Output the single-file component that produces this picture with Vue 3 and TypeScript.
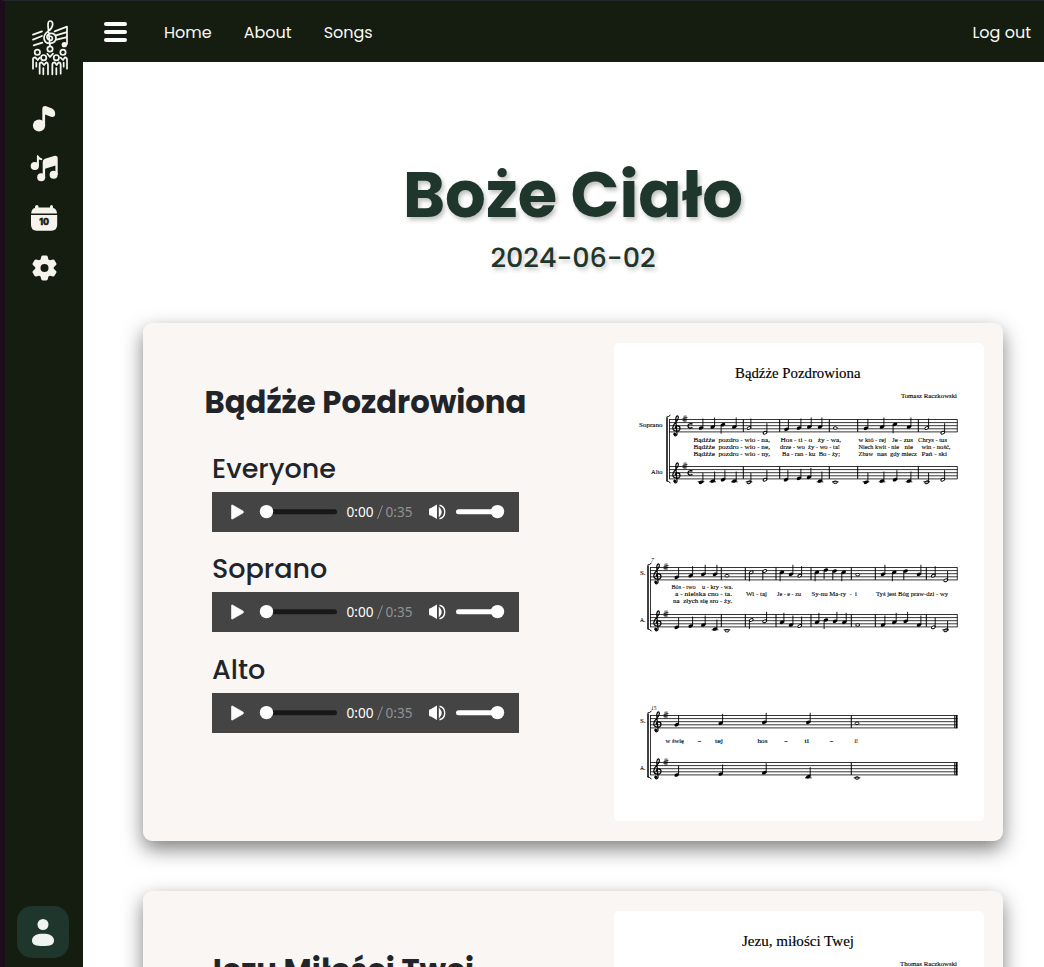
<script setup lang="ts">
type Kind = 'q' | 'h' | 'w'
// x, y, note value, stem pointing down
type Note = [number, number, Kind, boolean?]
interface Lyric { x: number; y: number; w: number; t: string }
interface Staff { top: number; label: string; notes: Note[] }
interface System { left: number; bars: number[]; staves: Staff[]; meter?: boolean; number?: string; final?: boolean; lyrics: Lyric[] }

const links = ['Home', 'About', 'Songs']
const parts = ['Everyone', 'Soprano', 'Alto']

const line = (y: number, items: [number, number, string][]): Lyric[] =>
  items.map(([x, end, t]) => ({ x, y, w: end - x, t }))

const systems: System[] = [
  {
    left: 669, meter: true, bars: [743.3, 779.7, 829.3, 857.7, 918.3],
    staves: [
      { top: 419.5, label: 'Soprano', notes: [[701, 428, 'q'], [712.7, 427, 'q'], [723, 424.7, 'q', true], [734.3, 427, 'q'], [749, 428, 'h'], [765, 432.7, 'h'], [786.5, 429.3, 'q'], [799, 428, 'q'], [809.3, 427, 'q'], [820, 427, 'q'], [835.3, 428, 'w'], [866, 428.3, 'q'], [882, 427, 'q'], [895, 424.3, 'q', true], [909, 427, 'q'], [926.7, 428, 'h'], [942.7, 432.7, 'h']] },
      { top: 466.5, label: 'Alto', notes: [[701, 482.3, 'q'], [712.7, 481, 'q'], [723, 479.7, 'q'], [734.3, 481, 'q'], [749, 482.3, 'h'], [765, 479.7, 'h'], [786, 479.7, 'q'], [799, 478.3, 'q'], [809, 477.3, 'q'], [820, 481, 'q'], [835.3, 482.3, 'w'], [866, 482.3, 'q'], [882, 481, 'q'], [895, 479.7, 'q'], [909, 481, 'q'], [926.7, 482.3, 'h'], [942.7, 479.7, 'h']] },
    ],
    lyrics: [
      ...line(441.7, [[693.5, 715, 'Bądźże'], [718.5, 770, 'pozdro - wio - na,'], [780.5, 841, 'Hos - ti - o   ży - wa,'], [858.5, 886, 'w któ - rej'], [892, 913, 'Je - zus'], [918, 947, 'Chrys - tus']]),
      ...line(448.5, [[693.5, 715, 'Bądźże'], [718.5, 770, 'pozdro - wio - ne,'], [780, 840, 'drze - wo  ży - wo - ta!'], [858.5, 899, 'Niech kwit - nie'], [904.5, 913, 'nie'], [921.5, 950.5, 'win - ność,']]),
      ...line(455.7, [[693.5, 715, 'Bądźże'], [718.5, 770, 'pozdro - wio - ny,'], [782, 840, 'Ba - ran - ku  Bo - ży;'], [858.5, 873, 'Zbaw'], [877, 887, 'nas'], [890, 917, 'gdy miecz'], [921.5, 947, 'Pań - ski']]),
    ],
  },
  {
    left: 650, number: '7', bars: [721.3, 745.3, 776, 811, 851.3, 875.3, 926.3],
    staves: [
      { top: 567.5, label: 'S.', notes: [[676.7, 577.3, 'q'], [690.7, 575.7, 'q'], [703.3, 574.3, 'q'], [715, 574.3, 'q'], [727, 575.7, 'w'], [751.3, 572.3, 'h', true], [764.7, 571, 'h', true], [782, 572.3, 'q', true], [791, 574.3, 'q'], [799.7, 575.7, 'h'], [817, 572.3, 'q', true], [826, 570, 'q', true], [834.7, 571, 'q', true], [843.7, 572.3, 'q', true], [857.7, 574.7, 'w'], [883, 574.3, 'q'], [894.3, 572.3, 'q', true], [905.7, 571, 'q', true], [919, 574.3, 'q'], [933.3, 575.7, 'h'], [945.7, 580.3, 'h']] },
      { top: 614.5, label: 'A.', notes: [[676.7, 627.3, 'q'], [690.7, 626, 'q'], [703.3, 625, 'q'], [715, 629, 'q'], [727, 630.7, 'w'], [751.3, 620, 'h', true], [764.7, 621.3, 'h'], [782, 622.3, 'q'], [791, 625, 'q'], [799.7, 626, 'h'], [817, 622.3, 'q'], [826, 620, 'q', true], [835, 621.3, 'q'], [844.3, 622.3, 'q'], [857.7, 625, 'w'], [883, 625, 'q'], [894.3, 622.3, 'q'], [905.7, 621.3, 'q'], [919, 625, 'q'], [933.3, 627.3, 'h'], [945.7, 630.3, 'h']] },
    ],
    lyrics: [
      ...line(589.3, [[671.5, 695.5, 'Bós - two'], [702, 733, 'u - kry - wa.']]),
      ...line(596.3, [[675, 732, 'a - nielska cno - ta.'], [746, 767, 'Wi - taj'], [777, 801, 'Je - e - zu'], [811.5, 857, 'Sy-nu Ma-ry  -  i'], [876, 948, 'Tyś jest Bóg praw-dzi - wy']]),
      ...line(603.3, [[673, 732, 'na  złych się sro - ży.']]),
    ],
  },
  {
    left: 650, number: '15', final: true, bars: [851.3],
    staves: [
      { top: 715.5, label: 'S.', notes: [[676.7, 724.7, 'q'], [720.7, 723.3, 'q'], [764.3, 722.3, 'q'], [808.3, 722.3, 'q'], [857, 723.3, 'w']] },
      { top: 762.5, label: 'A.', notes: [[676.7, 775, 'q'], [720.7, 774, 'q'], [764.3, 772.7, 'q'], [808.3, 776.7, 'q'], [857, 778, 'w']] },
    ],
    lyrics: line(742.5, [[665.5, 684, 'w świę'], [698, 701, '–'], [715, 723, 'tej'], [757.5, 767.5, 'hos'], [784.5, 787.5, '–'], [804.5, 809, 'ti'], [830, 833, '–'], [854.5, 858, 'i!']]),
  },
]
</script>

<template>
  <div class="app">
    <aside class="side">
      <svg class="logo" width="40" height="60" viewBox="0 0 120 180" fill="none" stroke="#f5f7f2" stroke-width="5.2" stroke-linecap="round" stroke-linejoin="round">
        <path d="M9 50L36 40M9 65L36 54M11 82L37 74M74 40L111 26V78M78 52L108 43M80 65L108 58" />
        <path d="M60 84L54 23Q54 9 60 9Q68 9 68 19Q67 31 53 41Q42 49 42 61Q44 77 61 76Q78 74 78 59Q76 45 62 46Q50 48 51 59Q54 67 61 66M59 54Q68 55 67 63Q65 70 58 66" />
        <circle cx="103" cy="80" r="5.5" fill="#f5f7f2" />
        <circle cx="60" cy="93" r="8" /><circle cx="22" cy="103" r="8" /><circle cx="99" cy="103" r="8" /><circle cx="41" cy="119" r="8" /><circle cx="79" cy="119" r="8" />
        <path d="M9 152V124Q9 118 16 118L23 126L29 119M52 107L60 117L69 107M92 119L99 126L105 118Q111 119 111 125V152M29 167V138Q29 133 35 133L42 141L49 133Q54 134 54 140V169M67 169V140Q67 133 74 133L80 141L86 133Q92 134 92 140V167M40 150V169M79 150V169M19 134V146M101 134V146" />
      </svg>
      <nav class="side-nav">
        <svg viewBox="0 0 32 32" fill="#f5f3eb"><circle cx="11" cy="23.5" r="6.1" /><path d="M14.3 24V7Q14.3 3.8 17.500 4L23.500 6.300Q27.200 8 27.200 12Q27 15.500 23 14.800L17.100 12.500V24Z" /></svg>
        <svg viewBox="0 0 32 32" fill="#f5f3eb"><circle cx="6.800" cy="14" r="4.100" /><path d="M8.900 14V4Q9.500 2 10.600 4Q11.500 5.800 14 6.500Q15 8 13.500 8.200L10.900 7.500V14Z" /><circle cx="13.200" cy="25.300" r="4" /><circle cx="25.600" cy="22.800" r="4" /><path d="M14.700 25V10Q14.700 7.500 17 6.800L26 4Q29.700 3.200 29.700 6.500V23H27.400V13.500L17.100 16.800V25Z" /></svg>
        <svg viewBox="0 0 32 32" fill="#f5f3eb"><path d="M7 6Q3.500 6.500 3.200 11.500H29Q28.700 6.500 25 6V4.500Q24.800 3 23.500 3Q22.200 3 22 4.500V5.500H10.500V4.500Q10.300 3 9 3Q7.500 3 7 4.500ZM3 13H29.200V23Q29 28.500 23.500 28.700H8.500Q3.200 28.500 3 23Z" /><text x="16.100" y="22.800" text-anchor="middle" class="cal">10</text></svg>
        <svg viewBox="0 0 32 32"><path fill="#f5f3eb" stroke="#f5f3eb" stroke-width="3" stroke-linejoin="round" d="M14.700 5H18.300L19.200 8.500L21.700 9.900L25.200 8.900L27 12L24.300 14.600V17.400L27 20L25.200 23.100L21.700 22.100L19.200 23.500L18.300 27H14.700L13.800 23.500L11.300 22.100L7.800 23.100L6 20L8.700 17.400V14.600L6 12L7.800 8.900L11.300 9.900L13.800 8.500Z" /><circle cx="16.500" cy="16" r="4" fill="#151c10" /></svg>
      </nav>
      <button class="user" aria-label="Account"><svg width="26" height="30" viewBox="0 0 26 30" fill="#f0f4f1"><circle cx="13" cy="7.500" r="5.500" /><path d="M2 23.500C2 18.500 7 16.700 13 16.700S24 18.500 24 23.500C24 28 20 29 13 29S2 28 2 23.500Z" /></svg></button>
    </aside>

    <div class="page">
      <header class="top">
        <span class="burger"><i></i><i></i><i></i></span>
        <nav class="links"><a v-for="l in links" :key="l">{{ l }}</a></nav>
        <a class="logout">Log out</a>
      </header>
      <main>
        <h1>Boże Ciało</h1>
        <p class="date">2024-06-02</p>
        <section class="card">
          <div class="media">
            <h2>Bądźże Pozdrowiona</h2>
            <div v-for="p in parts" :key="p" class="part">
              <h3>{{ p }}</h3>
              <div class="player">
                <svg width="307" height="40" viewBox="0 0 307 40">
                  <path d="M19.500 13.500Q19.500 12.600 20.500 13L31 19Q32.200 20 31 21L20.500 27Q19.500 27.400 19.500 26.500Z" fill="#fff" stroke="#fff" stroke-width=".6" />
                  <rect x="55" y="17.300" width="70" height="5" rx="2.500" fill="#181818" /><circle cx="54.500" cy="19.600" r="6.700" fill="#fff" />
                  <text x="134.500" y="25" textLength="27" lengthAdjust="spacingAndGlyphs" fill="#fff">0:00</text>
                  <path d="M165.500 27L170.500 13.500" stroke="#929292" />
                  <text x="173.500" y="25" textLength="27" lengthAdjust="spacingAndGlyphs" fill="#929292">0:35</text>
                  <path d="M217 17.500Q217 16 219 16L225 12.500V27L219 23.500Q217 23.500 217 22Z" fill="#fff" />
                  <path d="M227.500 16.500Q230.500 20 227.500 23.500ZM227.500 13.200Q232.700 14.500 232.700 20T227.500 26.800" fill="none" stroke="#fff" stroke-width="1.400" />
                  <rect x="244" y="17.300" width="44" height="5" rx="2.500" fill="#fff" /><circle cx="285.500" cy="19.600" r="6.700" fill="#fff" />
                </svg>
              </div>
            </div>
          </div>
          <svg class="sheet" width="370" height="478" viewBox="614 343 370 478">
            <defs>
              <g id="clef" fill="none" stroke="#000" stroke-linecap="round">
                <path stroke-width="1.200" d="M2.500 14.500C1.500 17 5.500 17 5 14L3.800 1C3.500-4 6.500-5 6.300-1.500C6.200 2 1 4 .8 8C.7 12.500 8 13 8 9C8 5.500 3 5.500 3.200 8.800" />
                <circle cx="2.700" cy="14.600" r="1" fill="#000" />
                <path stroke-width=".75" d="M12.100-3.500V2.500M13.900-3.800V2.200M10.900-1L15.100-2M10.900 1L15.100 0" />
              </g>
            </defs>
            <text x="735" y="378" textLength="125.500" lengthAdjust="spacingAndGlyphs" class="title">Bądźże Pozdrowiona</text>
            <text x="901" y="398" textLength="56" lengthAdjust="spacingAndGlyphs" class="lyric">Tomasz Raczkowski</text>
            <g v-for="(s, i) in systems" :key="i">
              <path :d="`M${s.left - 2} ${s.staves[0].top - 2}V${s.staves[1].top + 14.5}`" stroke="#000" stroke-width="1.500" />
              <path :d="`M${s.left - 2.5} ${s.staves[0].top - 2.5}q2 0 4-2M${s.left - 2.5} ${s.staves[1].top + 14.5}q2 0 4 2`" fill="none" stroke="#000" />
              <path :d="`M${s.left + 0.5} ${s.staves[0].top}V${s.staves[1].top + 12.4}`" stroke="#000" stroke-width=".8" />
              <text v-if="s.number" :x="s.left + 1" :y="s.staves[0].top - 6" class="num">{{ s.number }}</text>
              <g v-for="(st, j) in s.staves" :key="j">
                <text :x="s.left - (s.meter ? 30 : 10) + (st.label === 'Alto' ? 12 : 0)" :y="st.top + 7.5" :textLength="st.label === 'Soprano' ? 23.5 : st.label === 'Alto' ? 11.5 : 5.5" lengthAdjust="spacingAndGlyphs" class="lyric">{{ st.label }}</text>
                <path v-for="k in 5" :key="k" :d="`M${s.left} ${st.top + (k - 1) * 3.1}H957.5`" stroke="#000" stroke-width=".8" />
                <path v-for="b in s.bars" :key="b" :d="`M${b} ${st.top}v12.400`" stroke="#000" stroke-width="1" />
                <path v-if="s.final" :d="`M956.6 ${st.top - 0.3}v13`" stroke="#000" stroke-width="1.900" />
                <path :d="`M${s.final ? 954.6 : 957.3} ${st.top}v12.400`" stroke="#000" stroke-width=".8" />
                <use href="#clef" :x="s.left + 3" :y="st.top" />
                <path v-if="s.meter" :d="`M${s.left + 23.5} ${st.top + 4.5}q-4.500-1-4.500 2t4.500 1.700`" fill="none" stroke="#000" stroke-width="1.300" />
                <g v-for="(n, k) in st.notes" :key="k">
                  <ellipse :cx="n[0]" :cy="n[1]" :rx="n[2] === 'q' ? 2.4 : 2" :ry="n[2] === 'q' ? 1.6 : 1.3" :fill="n[2] === 'q' ? '#000' : '#fff'" stroke="#000" :stroke-width="n[2] === 'q' ? 0 : 0.9" :transform="n[2] === 'w' ? undefined : `rotate(-24 ${n[0]} ${n[1]})`" />
                  <path v-if="n[2] !== 'w'" :d="n[3] ? `M${n[0] - 1.9} ${n[1]}v9` : `M${n[0] + 1.9} ${n[1]}v-9.500`" stroke="#000" stroke-width=".9" />
                  <path v-if="n[1] > st.top + 14" :d="`M${n[0] - 3.3} ${st.top + 15.3}h6.600`" stroke="#000" stroke-width=".9" />
                </g>
              </g>
              <text v-for="(l, k) in s.lyrics" :key="'l' + k" :x="l.x" :y="l.y" :textLength="l.w" lengthAdjust="spacingAndGlyphs" class="lyric">{{ l.t }}</text>
            </g>
          </svg>
        </section>
        <section class="card">
          <div class="media"><h2>Jezu Miłości Twej</h2></div>
          <svg class="sheet" width="370" height="478" viewBox="614 911 370 478">
            <text x="742" y="946" textLength="112" lengthAdjust="spacingAndGlyphs" class="title">Jezu, miłości Twej</text>
            <text x="900" y="966" textLength="57" lengthAdjust="spacingAndGlyphs" class="lyric">Thomas Raczkowski</text>
          </svg>
        </section>
      </main>
    </div>
  </div>
</template>

<style>
body { margin: 0; overflow: hidden; }
</style>

<style scoped>
* { box-sizing: border-box; }
.app { display: flex; height: 967px; overflow: hidden; background: #fff; font-family: Poppins, Inter, "Noto Sans", sans-serif; }
.side { width: 83px; flex: none; border-left: 5px solid #1d0c1b; border-top: 1px solid #20262a; background: #151c10; display: flex; flex-direction: column; padding: 17px 14px 9px 12px; }
.logo { margin-left: 13px; flex: none; }
.side-nav { display: flex; flex-direction: column; gap: 18px; margin: 24px 0 0 11px; }
.side-nav svg { width: 32px; height: 32px; }
.cal { font: 900 8.500px Inter, sans-serif; fill: #151c10; stroke: #151c10; stroke-width: .3; }
.user { margin-top: auto; width: 52px; height: 52px; flex: none; border: 0; border-radius: 15px; background: #1e362b; padding: 0; display: flex; align-items: center; justify-content: center; }
.page { flex: 1; min-width: 0; }
.top { height: 62px; background: #151c10; border-top: 1px solid #20262a; display: flex; align-items: center; padding: 2px 13px 0 21px; color: #f7f9f5; font-size: 16px; }
.burger { width: 23px; display: flex; flex-direction: column; gap: 4px; margin-right: 37px; margin-top: -1px; }
.burger i { height: 4px; border-radius: 2px; background: #fff; }
.links { display: flex; gap: 32px; }
.logout { margin-left: auto; }
main { padding: 92px 41px 0 60px; }
h1 { margin: 0; text-align: center; font-size: 64px; line-height: 82px; font-weight: 700; color: #1e362b; text-shadow: 2px 3px 4px rgba(0, 0, 0, .25); }
.date { margin: 4px 0 0; text-align: center; font-size: 27px; line-height: 36px; font-weight: 500; color: #1e362b; text-shadow: 2px 3px 4px rgba(0, 0, 0, .22); }
.card { height: 518px; margin-top: 47px; border-radius: 9px; background: #f9f6f4; display: flex; justify-content: space-between; padding: 20px 19px 20px 69px; box-shadow: 0 8px 20px rgba(0, 0, 0, .5); }
.card + .card { margin-top: 50px; }
.media { width: 307px; padding-top: 40px; color: #212529; }
h2 { margin: 0 0 22px -7.500px; white-space: nowrap; font-size: 30.700px; line-height: 40px; font-weight: 700; }
.part { width: 307px; height: 100.400px; }
h3 { margin: 0; font-size: 27px; line-height: 47px; height: 47px; font-weight: 500; }
.player { height: 40px; background: #444; }
.player svg { display: block; }
.player text { font: 14px "Noto Sans", sans-serif; }
.sheet { display: block; flex: none; background: #fff; border-radius: 5px; }
.title { font: 14.200px "Liberation Serif", serif; stroke: #000; stroke-width: .15; }
.lyric { font: 6.300px "Liberation Serif", serif; stroke: #000; stroke-width: .1; white-space: pre; }
.num { font: italic 5.500px "Liberation Serif", serif; }
</style>
